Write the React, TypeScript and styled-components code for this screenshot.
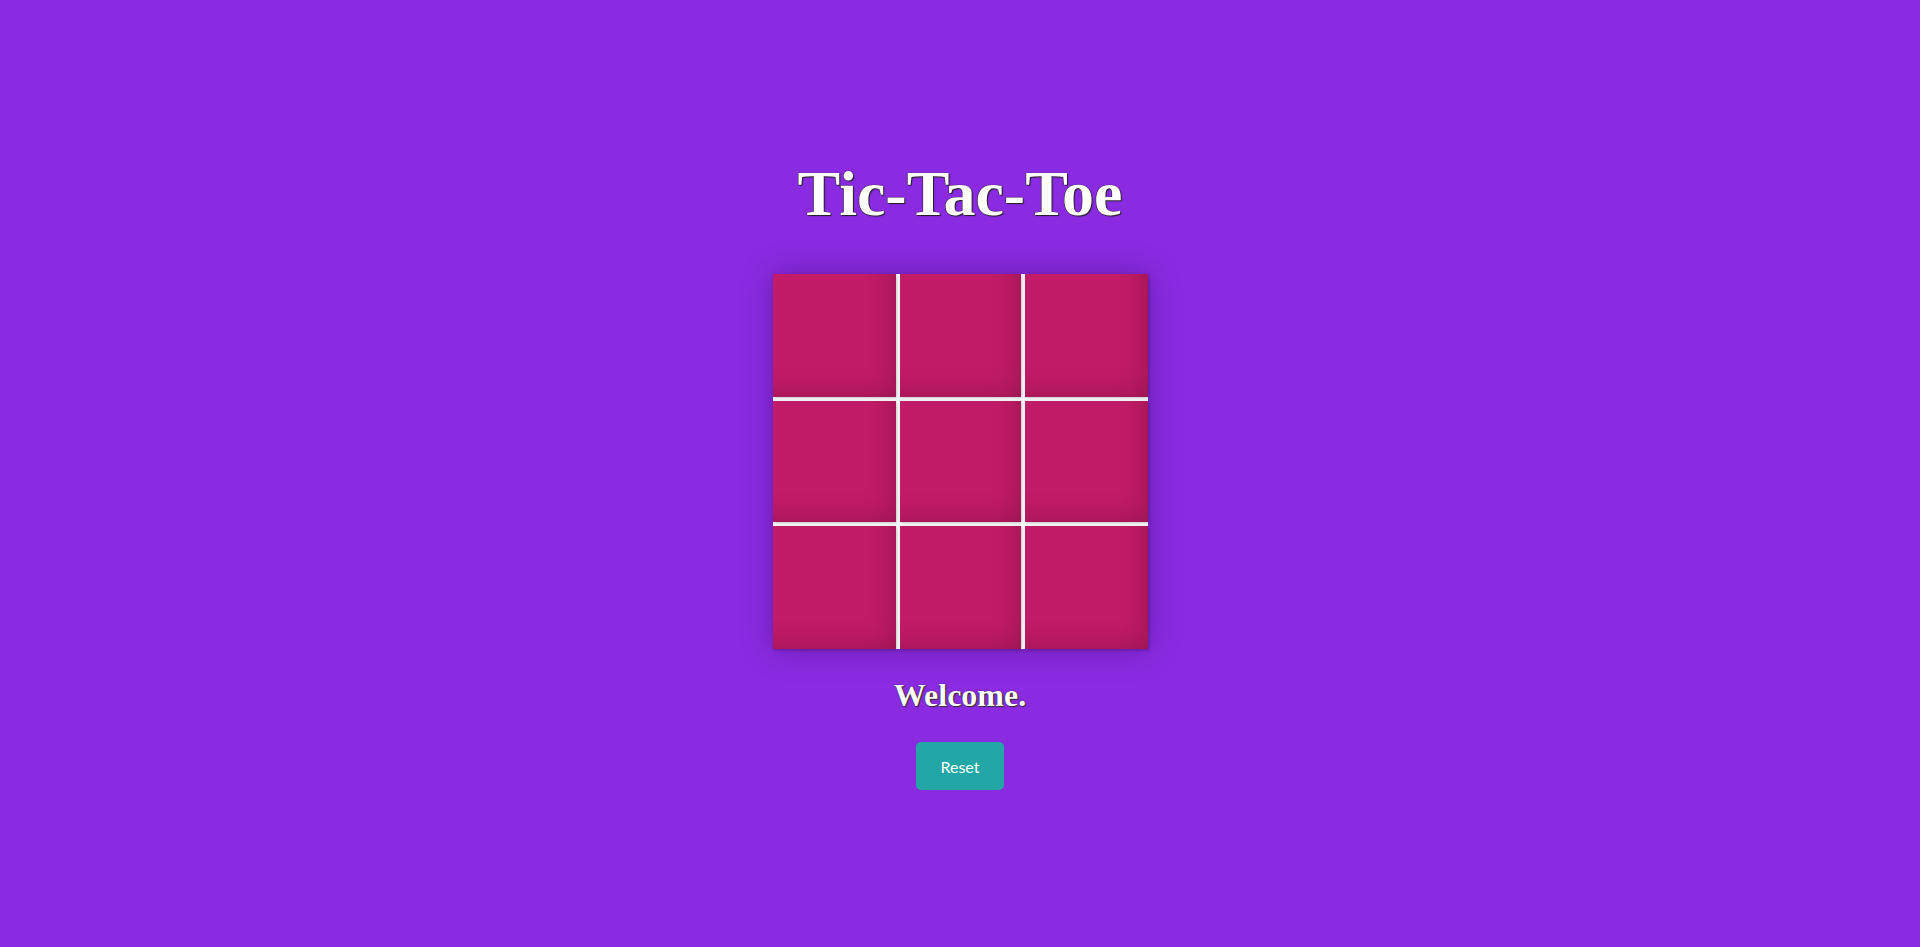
import React from "react";
import styled, { createGlobalStyle } from "styled-components";

const GlobalStyle = createGlobalStyle`
  html, body {
    margin: 0;
    padding: 0;
    background: #8a2be2;
  }
  body {
    font-family: "Liberation Serif", serif;
  }
`;

const Page = styled.main`
  min-height: 100vh;
  box-sizing: border-box;
  padding-top: 162px;
  display: flex;
  flex-direction: column;
  align-items: center;
`;

const Title = styled.h1`
  margin: 0;
  font-family: "Liberation Serif", serif;
  font-weight: 700;
  font-size: 64px;
  line-height: 64px;
  letter-spacing: 0;
  color: #fff;
  text-shadow: 0 0 1px #000, 1px 1px 1px #222, -0.5px -0.5px 0 #333;
`;

const Board = styled.div`
  margin-top: 48px;
  display: grid;
  grid-template-columns: 123px 121px 123px;
  grid-template-rows: 123px 121px 123px;
  gap: 4px;
  background: #fff;
  box-shadow: 0 0 28px rgba(40, 0, 70, 0.35);
`;

const Cell = styled.button`
  border: none;
  padding: 0;
  margin: 0;
  background: #c21b67;
  cursor: pointer;
  box-shadow: inset -22px -22px 30px -22px rgba(0, 0, 0, 0.24),
    1px 1px 3px rgba(0, 0, 0, 0.25);
`;

const Status = styled.h2`
  margin: 31px 0 0;
  font-family: "Liberation Serif", serif;
  font-weight: 700;
  font-size: 32px;
  line-height: 30px;
  color: #fff;
  text-shadow: 0 0 1px #000, 1px 1px 1px #333;
`;

const ResetButton = styled.button`
  margin-top: 32px;
  width: 88px;
  height: 48px;
  border: none;
  border-radius: 5px;
  background: #22a7a6;
  color: #fff;
  font-family: Lato, "Open Sans", sans-serif;
  font-size: 16px;
  cursor: pointer;
`;

export default function App() {
  const cells = Array.from({ length: 9 }, (_, i) => i);
  return (
    <>
      <GlobalStyle />
      <Page>
        <Title>Tic-Tac-Toe</Title>
        <Board>
          {cells.map((i) => (
            <Cell key={i} aria-label={`cell ${i + 1}`} />
          ))}
        </Board>
        <Status>Welcome.</Status>
        <ResetButton>Reset</ResetButton>
      </Page>
    </>
  );
}
